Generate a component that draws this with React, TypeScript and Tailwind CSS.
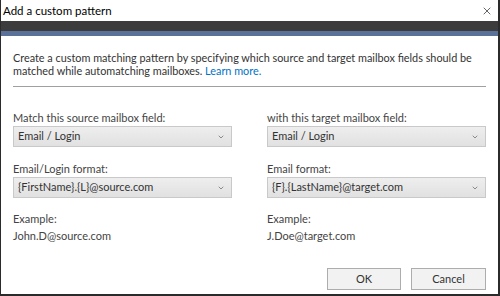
import { ChevronDown, X } from "lucide-react";

interface SelectBoxProps {
  value: string;
}

function SelectBox({ value }: SelectBoxProps) {
  return (
    <div className="flex h-[21px] items-center justify-between border border-[#c9c9c9] bg-gradient-to-b from-[#eeeeee] to-[#e1e1e1] pl-[4px] pr-[6px] text-[11px] text-[#333]">
      <span>{value}</span>
      <ChevronDown className="h-[8px] w-[8px] text-[#8a8a8a]" strokeWidth={3} />
    </div>
  );
}

interface FieldProps {
  label: string;
  value: string;
}

function Field({ label, value }: FieldProps) {
  return (
    <div className="flex flex-col">
      <label className="mb-px text-[11px] leading-[14px] text-[#444]">{label}</label>
      <SelectBox value={value} />
    </div>
  );
}

export default function App() {
  const columns = [
    {
      match: { label: "Match this source mailbox field:", value: "Email / Login" },
      format: { label: "Email/Login format:", value: "{FirstName}.{L}@source.com" },
      example: "John.D@source.com",
    },
    {
      match: { label: "with this target mailbox field:", value: "Email / Login" },
      format: { label: "Email format:", value: "{F}.{LastName}@target.com" },
      example: "J.Doe@target.com",
    },
  ];

  return (
    <div
      className="flex h-[296px] w-[500px] flex-col overflow-hidden border-b-2 border-l border-r-2 border-[#2b2b2b] bg-white"
      style={{ fontFamily: 'Lato, "Open Sans", sans-serif' }}
    >
      {/* Title bar */}
      <div className="flex h-[21px] items-center justify-between pl-[2px] pr-[5px]">
        <span className="text-[11.5px] text-black">Add a custom pattern</span>
        <X className="h-[12px] w-[12px] text-[#333]" strokeWidth={1.5} />
      </div>
      <div className="h-[10px] bg-[#3c3c3c]" />
      <div className="h-[5px] bg-[#5a7299]" />

      {/* Body */}
      <div className="flex flex-1 flex-col px-[12px] pt-[15px]">
        <p className="whitespace-nowrap text-[10.85px] leading-[13px] text-[#333]">
          Create a custom matching pattern by specifying which source and target mailbox fields should be
          <br />
          matched while automatching mailboxes. <span className="text-[#0072c6]">Learn more.</span>
        </p>
        <div className="mt-[9px] h-px bg-[#a0a0a0]" />

        <div className="mt-[24px] grid grid-cols-2 gap-x-[35px]">
          {columns.map((col, i) => (
            <div key={i} className="flex flex-col">
              <Field label={col.match.label} value={col.match.value} />
              <div className="mt-[15px]">
                <Field label={col.format.label} value={col.format.value} />
              </div>
              <div className="mt-[12px] text-[11px] leading-[17px] text-[#444]">
                <div>Example:</div>
                <div>{col.example}</div>
              </div>
            </div>
          ))}
        </div>

        {/* Buttons */}
        <div className="mt-auto mb-[4px] flex justify-end gap-[10px]">
          <button className="h-[22px] w-[74px] border border-[#adadad] bg-[#f2f2f2] text-[11px] text-[#333]">
            OK
          </button>
          <button className="h-[22px] w-[75px] border border-[#adadad] bg-[#f2f2f2] text-[11px] text-[#333]">
            Cancel
          </button>
        </div>
      </div>
    </div>
  );
}
